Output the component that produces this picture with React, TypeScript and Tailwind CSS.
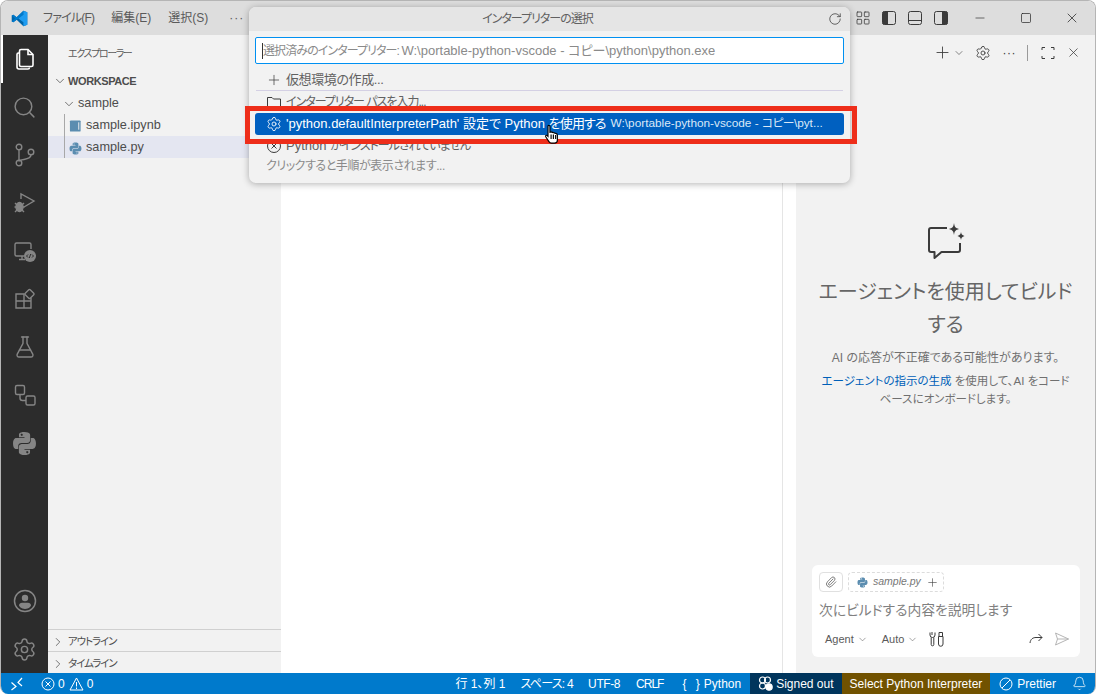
import {
  Bell,
  ChevronDown,
  ChevronRight,
  FlaskConical,
  LayoutGrid,
  Minus,
  Paperclip,
  Plus,
  RotateCw,
  Search,
  Settings,
  Square,
  X,
} from "lucide-react";

const font = "font-['Liberation_Sans','Noto_Sans_CJK_JP',sans-serif] [font-feature-settings:'palt']";

const PythonIcon = ({ size = 14, color = "#5b8db0" }: { size?: number; color?: string }) => (
  <svg width={size} height={size} viewBox="0 0 24 24" fill={color}>
    <path d="M11.9 1C6.4 1 6.7 3.4 6.7 3.4v2.5h5.3v.8H4.6S1 6.3 1 11.9s3.100 5.400 3.100 5.400H6v-2.600s-.1-3.100 3.100-3.100h5.300s3 0 3-2.900V3.900S17.800 1 11.900 1zM9 2.700a1 1 0 1 1 0 1.900 1 1 0 0 1 0-1.900z" />
    <path d="M12.100 23c5.500 0 5.200-2.400 5.200-2.400v-2.500H12v-.8h7.400s3.600.4 3.600-5.200-3.100-5.400-3.100-5.400H18v2.600s.1 3.100-3.100 3.100H9.600s-3 0-3 2.900v4.800S6.200 23 12.100 23zM15 21.300a1 1 0 1 1 0-1.900 1 1 0 0 1 0 1.900z" />
  </svg>
);

const VscodeLogo = () => (
  <svg width="17" height="17" viewBox="0 0 24 24">
    <path fill="#0065a9" d="M17.500 1 8 10.200 3.300 6.600 1 7.700v8.600l2.300 1.100L8 13.800 17.500 23l5.500-2.300V3.300z" />
    <path fill="#007acc" d="M17.500 1 8 10.200l-4.700-3.600L1 7.700 5.600 12 1 16.300l2.300 1.100L17.500 6.700V1z" />
    <path fill="#1f9cf0" d="M17.500 23V1L23 3.300v17.400zM17.500 6.700 10.500 12l7 5.300z" />
  </svg>
);

const ActivityIcon = ({ children, active }: { children: React.ReactNode; active?: boolean }) => (
  <div className={`relative flex h-12 w-full items-center justify-center ${active ? "text-white" : "text-[#858585]"}`}>
    {active && <div className="absolute left-0 top-0 h-full w-[2px] bg-white" />}
    {children}
  </div>
);

const LayoutIcon = ({ fill }: { fill: "left" | "bottom" | "right" }) => (
  <svg width="16" height="16" viewBox="0 0 16 16" fill="none" stroke="#3b3b3b">
    <rect x="1.500" y="1.500" width="13" height="13" rx="2" />
    {fill === "left" && <path d="M2 2h4.500v12H2z" fill="#3b3b3b" />}
    {fill === "right" && <path d="M9.500 2H14v12H9.500z" fill="#3b3b3b" />}
    {fill === "bottom" && <path d="M1.500 10.500h13" />}
  </svg>
);

const TitleBar = () => (
  <div className="flex h-[34px] shrink-0 items-center bg-[#dddddd] text-[12px] text-[#5a5a5a]">
    <div className="flex w-[35px] justify-center pl-[1px]">
      <VscodeLogo />
    </div>
    <span className="ml-[7px] tracking-[-0.8px]">ファイル(F)</span>
    <span className="ml-[17px]">編集(E)</span>
    <span className="ml-[17px]">選択(S)</span>
    <span className="ml-[21px] tracking-[1px]">···</span>
    <div className="ml-auto flex items-center">
      <div className="flex items-center gap-[10px] pr-[8px]">
        <LayoutGrid size={16} strokeWidth={1.2} color="#3b3b3b" />
        <LayoutIcon fill="left" />
        <LayoutIcon fill="bottom" />
        <LayoutIcon fill="right" />
      </div>
      <div className="flex w-[46px] justify-center">
        <Minus size={14} strokeWidth={1.1} color="#222" />
      </div>
      <div className="flex w-[46px] justify-center">
        <Square size={12} strokeWidth={1.4} color="#222" />
      </div>
      <div className="flex w-[46px] justify-center">
        <X size={16} strokeWidth={1.1} color="#222" />
      </div>
    </div>
  </div>
);

const ActivityBar = () => (
  <div className="flex w-[47px] shrink-0 flex-col items-center bg-[#2c2c2c]">
    <ActivityIcon active>
      <svg width="24" height="24" viewBox="0 0 24 24" fill="none" stroke="currentColor" strokeWidth="1.600">
        <path d="M8 2.500h7l5 5V18a1.500 1.500 0 0 1-1.500 1.500H8A1.500 1.500 0 0 1 6.500 18V4A1.500 1.500 0 0 1 8 2.500z" fill="#2c2c2c" />
        <path d="M15 2.500v5h5" />
        <path d="M6.500 6H5.500A1.500 1.500 0 0 0 4 7.500V20a2 2 0 0 0 2 2h9a1.500 1.500 0 0 0 1.500-1.500" />
      </svg>
    </ActivityIcon>
    <ActivityIcon>
      <Search size={25} strokeWidth={1.4} />
    </ActivityIcon>
    <ActivityIcon>
      <svg width="24" height="24" viewBox="0 0 24 24" fill="none" stroke="currentColor" strokeWidth="1.400">
        <circle cx="6" cy="4" r="2.800" />
        <circle cx="6" cy="20" r="2.800" />
        <circle cx="18" cy="9" r="2.800" />
        <path d="M6 6.800v10.400M18 11.800c0 3.500-4 4.200-7 4.700-2.500.4-5 1-5 2" />
      </svg>
    </ActivityIcon>
    <ActivityIcon>
      <svg width="24" height="24" viewBox="0 0 24 24" fill="none" stroke="currentColor" strokeWidth="1.400">
        <path d="M8 8V3l13 7-10 6" />
        <ellipse cx="6.500" cy="16" rx="3.500" ry="4.500" fill="currentColor" />
        <path d="M2 12l2 2M11 12l-2 2M1.500 16H3M10 16h1.500M2 21l2-2M11 21l-2-2" />
      </svg>
    </ActivityIcon>
    <ActivityIcon>
      <svg width="24" height="24" viewBox="0 0 24 24" fill="none" stroke="currentColor" strokeWidth="1.400">
        <path d="M11 17H3.500A1.500 1.500 0 0 1 2 15.500v-10A1.500 1.500 0 0 1 3.500 4h13A1.500 1.500 0 0 1 18 5.500V10" />
        <path d="M6 20.500h6M9 17v3.500" />
        <circle cx="17" cy="17" r="6" fill="currentColor" stroke="none" />
        <path d="M15 15.500 13.500 17l1.500 1.500M19 15.500l1.500 1.500-1.500 1.500M17.700 15l-1.400 4" stroke="#2c2c2c" strokeWidth="1" />
      </svg>
    </ActivityIcon>
    <ActivityIcon>
      <svg width="24" height="24" viewBox="0 0 24 24" fill="none" stroke="currentColor" strokeWidth="1.400">
        <path d="M3 7h8v14H3zM3 14h15v7h-7M11 7v7M18 14V11" />
        <rect x="13" y="3.500" width="7" height="7" rx="1" transform="rotate(45 16.500 7)" />
      </svg>
    </ActivityIcon>
    <ActivityIcon>
      <FlaskConical size={24} strokeWidth={1.4} />
    </ActivityIcon>
    <ActivityIcon>
      <svg width="24" height="24" viewBox="0 0 24 24" fill="none" stroke="currentColor" strokeWidth="1.400">
        <rect x="2.500" y="2.500" width="9" height="9" rx="1.500" />
        <rect x="13" y="13" width="9" height="9" rx="1.500" />
        <path d="M7 11.500V15a2.500 2.500 0 0 0 2.500 2.500H13" />
      </svg>
    </ActivityIcon>
    <ActivityIcon>
      <PythonIcon size={25} color="#858585" />
    </ActivityIcon>
    <div className="mt-auto" />
    <ActivityIcon>
      <svg width="24" height="24" viewBox="0 0 24 24" fill="none" stroke="currentColor" strokeWidth="1.500">
        <circle cx="12" cy="12" r="10.500" />
        <circle cx="12" cy="9" r="3.200" fill="currentColor" stroke="none" />
        <path d="M6 16.500c0-2 1.500-2.800 3-2.800h6c1.500 0 3 .8 3 2.800 0 .6-2 3.500-6 3.500s-6-2.900-6-3.500z" fill="currentColor" stroke="none" />
      </svg>
    </ActivityIcon>
    <ActivityIcon>
      <Settings size={25} strokeWidth={1.4} />
    </ActivityIcon>
  </div>
);

const Sidebar = () => (
  <div className="flex w-[233px] shrink-0 flex-col bg-[#f2f2f2] text-[#4d4d4d]">
    <div className="flex h-[35px] items-center pl-[20px] pt-[2px] text-[10px] tracking-[-1.4px] text-[#5a5a5a]">エクスプローラー</div>
    <div className="flex h-[22px] items-center pl-[5px] text-[11px] font-bold tracking-[-0.4px] text-[#4d4d4d]">
      <ChevronDown size={14} strokeWidth={1.3} />
      <span className="ml-[1px]">WORKSPACE</span>
    </div>
    <div className="flex h-[22px] items-center pl-[14px] pt-[2px] text-[12.700px]">
      <ChevronDown size={14} strokeWidth={1.3} />
      <span className="ml-[2px]">sample</span>
    </div>
    <div className="ml-[16px] border-l border-[#a8a8a8]">
      <div className="flex h-[22px] items-center pl-[4px] pt-[2px] text-[12.700px]">
        <svg width="13" height="14" viewBox="0 0 14 14" fill="#5b8db0">
          <path d="M2 1h9.500a1 1 0 0 1 1 1v10a1 1 0 0 1-1 1H2a1 1 0 0 1-1-1V2a1 1 0 0 1 1-1z" />
          <path d="M10.500 3v8" stroke="#f2f2f2" />
        </svg>
        <span className="ml-[4px]">sample.ipynb</span>
      </div>
    </div>
    <div className="flex h-[22px] items-center bg-[#e4e6f1] pl-[16px] text-[12.700px]">
      <div className="flex h-full items-center border-l border-[#a8a8a8] pl-[4px] pt-[2px]">
        <PythonIcon size={13} />
        <span className="ml-[4px]">sample.py</span>
      </div>
    </div>
    <div className="mt-auto flex h-[22px] items-center border-t border-[#d0d0d0] pl-[3px] pt-[2px] text-[10.500px] tracking-[-1.1px]">
      <ChevronRight size={14} strokeWidth={1.3} />
      <span className="ml-[3px]">アウトライン</span>
    </div>
    <div className="flex h-[22px] items-center border-t border-[#d0d0d0] pl-[3px] pt-[2px] text-[10.500px] tracking-[-1.1px]">
      <ChevronRight size={14} strokeWidth={1.3} />
      <span className="ml-[3px]">タイムライン</span>
    </div>
  </div>
);

const ChatPanel = () => (
  <div className="flex min-w-0 flex-1 flex-col bg-[#f2f2f2] text-[#5a5a5a]">
    <div className="flex h-[35px] items-center justify-end pr-[14px] text-[#3b3b3b]">
      <Plus size={19} strokeWidth={1.1} />
      <ChevronDown size={12} strokeWidth={1.2} className="ml-[1px]" />
      <Settings size={16} strokeWidth={1.3} className="ml-[10px]" />
      <span className="ml-[12px] text-[12px] leading-none tracking-[0.5px]">···</span>
      <div className="ml-[11px] h-[16px] w-px bg-[#9a9a9a]" />
      <svg width="14" height="14" viewBox="0 0 14 14" fill="none" stroke="#3b3b3b" className="ml-[13px]">
        <path d="M1 4V1.500h3M10 1.500h3V4M13 10v2.500h-3M4 12.500H1V10" />
      </svg>
      <X size={15} strokeWidth={1.2} className="ml-[11px]" />
    </div>
    <div className="flex flex-col items-center pt-[152px]">
      <svg width="42" height="40" viewBox="0 0 42 40" fill="none" stroke="#3b3b3b" strokeWidth="2">
        <path d="M22 6H6a2 2 0 0 0-2 2v20a2 2 0 0 0 2 2h3.500v6l7-6H33a2 2 0 0 0 2-2V21" strokeLinejoin="round" />
        <path d="M29 1c.6 4 1.500 5 5 6-3.500 1-4.400 2-5 6-.6-4-1.500-5-5-6 3.500-1 4.400-2 5-6zM36 10c.4 2.500 1 3.100 3.500 4-2.500.9-3.100 1.500-3.500 4-.4-2.500-1-3.100-3.500-4 2.500-.9 3.100-1.500 3.500-4z" fill="#3b3b3b" stroke="none" />
      </svg>
      <div className="mt-[14px] w-[270px] text-center text-[20px] leading-[33px] text-[#666666]">
        エージェントを使用してビルド
        <br />
        する
      </div>
      <div className="mt-[7px] text-[12px] leading-[18px] text-[#707070]">AI の応答が不正確である可能性があります。</div>
      <div className="mt-[5px] w-[262px] text-center text-[11.500px] leading-[18px] text-[#707070]">
        <span className="text-[#005fb8]">エージェントの指示の生成</span> を使用して、AI をコード
        <br />
        ベースにオンボードします。
      </div>
    </div>
    <div className="mb-[16px] ml-[16px] mr-[15px] mt-auto flex h-[92px] flex-col rounded-[6px] bg-white px-[7px] pt-[7px]">
      <div className="flex items-center gap-[5px]">
        <div className="flex h-[20px] w-[24px] items-center justify-center rounded-[4px] border border-[#e0e0e0] text-[#3b3b3b]">
          <Paperclip size={12} strokeWidth={1.3} />
        </div>
        <div className="flex h-[20px] items-center rounded-[4px] border border-dashed border-[#dcdcdc] pl-[8px] pr-[4px] text-[10.500px] italic text-[#777777]">
          <PythonIcon size={11} />
          <span className="ml-[5px]">sample.py</span>
          <Plus size={13} strokeWidth={1.1} className="ml-[5px] text-[#3b3b3b]" />
        </div>
      </div>
      <div className="mt-[10px] text-[13.800px] leading-[18px] text-[#808080]">次にビルドする内容を説明します</div>
      <div className="mt-[11px] flex items-center text-[11px] text-[#5a5a5a]">
        <span className="ml-[6px]">Agent</span>
        <ChevronDown size={11} strokeWidth={1.2} className="ml-[3px]" />
        <span className="ml-[14px]">Auto</span>
        <ChevronDown size={11} strokeWidth={1.2} className="ml-[3px]" />
        <svg width="16" height="16" viewBox="0 0 16 16" fill="none" stroke="#3b3b3b" className="ml-[11px]">
          <path d="M3 1v3M1 1.500V4a2.500 2.500 0 0 0 5 0V1.500M2.200 6.500v7a1.300 1.300 0 0 0 2.600 0v-7" />
          <path d="M10 5.500V1.500h3.500v4zM9.500 5.500H14v7.500a2.200 2.200 0 0 1-4.500 0z" />
        </svg>
        <svg width="14" height="14" viewBox="0 0 14 14" fill="none" stroke="#3b3b3b" className="ml-auto">
          <path d="M1 11c.5-4 3-5.500 6-5.500h6M9.500 2l3.500 3.500L9.500 9" />
        </svg>
        <svg width="16" height="16" viewBox="0 0 16 16" fill="none" stroke="#b5b5b5" className="ml-[11px] mr-[3px]">
          <path d="M1.500 2 14.500 8 1.500 14 3.500 8zM3.500 8h11" />
        </svg>
      </div>
    </div>
  </div>
);

const StatusBar = () => (
  <div className="flex h-[21px] shrink-0 items-center bg-[#007acc] text-[12px] text-white">
    <div className="flex w-[32px] justify-center">
      <svg width="14" height="14" viewBox="0 0 14 14" fill="none" stroke="white" strokeWidth="1.200">
        <path d="M1.500 5.500 6 9.500 1.500 13M12 1 8 5.500 12 9" />
      </svg>
    </div>
    <div className="ml-[8px] flex items-center gap-[3px]">
      <svg width="14" height="14" viewBox="0 0 14 14" fill="none" stroke="white">
        <circle cx="7" cy="7" r="6" />
        <path d="M4.500 4.500l5 5M9.500 4.500l-5 5" />
      </svg>
      <span>0</span>
      <svg width="15" height="14" viewBox="0 0 15 14" fill="none" stroke="white" className="ml-[1px]">
        <path d="M7.500 1 14 13H1zM7.500 5v4.500M7.500 10.500v1.500" />
      </svg>
      <span>0</span>
    </div>
    <div className="ml-auto flex h-full items-center">
      <span>行 1、列 1</span>
      <span className="ml-[15px] tracking-[-0.7px]">スペース: 4</span>
      <span className="ml-[15px] tracking-[-0.4px]">UTF-8</span>
      <span className="ml-[16px] tracking-[-1px]">CRLF</span>
      <span className="ml-[19px] tracking-[3px]">{"{ }"}</span>
      <span className="ml-[1px]">Python</span>
      <div className="ml-[9px] flex h-full items-center bg-[#00355c] px-[8px]">
        <svg width="15" height="15" viewBox="0 0 15 15" fill="none" stroke="white" strokeWidth="1.200" className="mr-[3px]">
          <circle cx="4.500" cy="4" r="3" />
          <circle cx="9.500" cy="4" r="3" />
          <circle cx="4.500" cy="10" r="3" />
          <circle cx="11" cy="11" r="3.200" fill="white" />
        </svg>
        <span>Signed out</span>
      </div>
      <div className="flex h-full items-center bg-[#715200] px-[8px]">Select Python Interpreter</div>
      <div className="flex items-center px-[9px]">
        <svg width="14" height="14" viewBox="0 0 14 14" fill="none" stroke="white" className="mr-[4px]">
          <circle cx="7" cy="7" r="6" />
          <path d="M3 11 11 3" />
        </svg>
        Prettier
      </div>
      <Bell size={15} strokeWidth={1.2} className="ml-[7px] mr-[8px]" />
    </div>
  </div>
);

const QuickPick = () => (
  <div className="absolute left-[249px] top-[7px] w-[601px] overflow-hidden rounded-[7px] bg-[#f2f2f2] shadow-[0_1px_7px_rgba(0,0,0,0.3)]">
    <div className="relative flex h-[24px] items-center justify-center bg-[#e5e5e5] pr-[24px] text-[12px] tracking-[-1px] text-[#616161]">
      インタープリターの選択
      <RotateCw size={14} strokeWidth={1.3} className="absolute right-[8px] top-[5px] text-[#3b3b3b]" />
    </div>
    <div className="mx-[6px] mt-[6px] flex h-[27px] items-center whitespace-pre rounded-[2px] border border-[#0090f1] bg-white pl-[6px] pt-px text-[13px] text-[#8a8a8a]">
      <div className="h-[16px] w-px bg-[#333333]" />
      <span className="text-[12px] tracking-[-0.9px]">選択済みのインタープリター: </span>
      <span>W:\portable-python-vscode - コピー\python\python.exe</span>
    </div>
    <div className="mx-[6px] mt-[4px] flex h-[22px] items-center pl-[11px] pt-px text-[13px] text-[#616161]">
      <Plus size={16} strokeWidth={1.1} className="text-[#3b3b3b]" />
      <span className="ml-[4px] tracking-[-0.4px]">仮想環境の作成...</span>
    </div>
    <div className="mx-[7px] h-px bg-[#d4d0e4]" />
    <div className="mx-[6px] flex h-[22px] items-center whitespace-pre pl-[11px] text-[12px] text-[#616161]">
      <svg width="16" height="16" viewBox="0 0 16 16" fill="none" stroke="#3b3b3b">
        <path d="M1.500 3.500h4.500l1.500 1.500h7v8.500h-13z" />
      </svg>
      <span className="ml-[4px] tracking-[-1px]">インタープリター パスを入力...</span>
    </div>
    <div className="mx-[6px] flex h-[22px] items-center whitespace-pre rounded-[3px] bg-[#0060c0] pl-[11px] text-[13px] text-white">
      <Settings size={16} strokeWidth={1.3} />
      <span className="ml-[4px]">'python.defaultInterpreterPath' 設定で Python </span>
      <span className="tracking-[-0.9px]">を使用する</span>
      <span className="ml-[5px] text-[11.800px] text-[#dbe8f7]">W:\portable-python-vscode - </span>
      <span className="text-[11.800px] tracking-[-0.6px] text-[#dbe8f7]">コピー</span>
      <span className="text-[11.800px] text-[#dbe8f7]">\pyt...</span>
    </div>
    <div className="mx-[6px] mt-[1px] flex h-[20px] items-center whitespace-pre pl-[11px] text-[13px] text-[#616161]">
      <svg width="16" height="16" viewBox="0 0 16 16" fill="none" stroke="#3b3b3b">
        <circle cx="8" cy="8" r="6.500" />
        <path d="M5.500 5.500l5 5M10.500 5.500l-5 5" />
      </svg>
      <span className="ml-[4px]">Python </span>
      <span className="text-[12px] tracking-[-1px]">がインストールされていません</span>
    </div>
    <div className="mx-[6px] mb-[7px] flex h-[20px] items-center pl-[11px] text-[12px] tracking-[-0.45px] text-[#8a8a8a]">クリックすると手順が表示されます...</div>
  </div>
);

const HandCursor = () => (
  <svg width="16" height="21" viewBox="0 0 14 18" className="absolute left-[544px] top-[124px]">
    <path
      d="M3.500 1.500c.6-.8 1.700-.4 1.700.6V7l1-.3c.5 0 1 .1 1.200.5l1 .1c.5 0 .9.200 1.100.5l1 .2c.7.200 1.200.7 1.200 1.500V14c0 1.300-.9 2.500-2.500 2.500H6.500c-1 0-1.700-.5-2.200-1.300L1.500 11c-.5-.8.500-1.800 1.300-1.100l.7.700z"
      fill="white"
      stroke="black"
    />
    <path d="M6.200 9v4M8.200 9v4M10.200 9.500V13" stroke="black" fill="none" />
  </svg>
);

export default function App() {
  return (
    <div className={`${font} relative h-[695px] w-[1096px] overflow-hidden bg-white`}>
      <div className="flex h-[694px] flex-col overflow-hidden rounded-[8px] border border-b-0 border-[#b5b5b5] bg-white">
        <TitleBar />
        <div className="flex min-h-0 flex-1">
          <ActivityBar />
          <Sidebar />
          <div className="w-[501px] shrink-0 bg-white" />
          <div className="w-[14px] shrink-0 border-l border-[#e5e5e5] bg-white" />
          <ChatPanel />
        </div>
        <StatusBar />
      </div>
      <QuickPick />
      <div className="absolute left-[245px] top-[106px] h-[38px] w-[612px] border-[5px] border-[#ee2e1a]" />
      <HandCursor />
    </div>
  );
}
